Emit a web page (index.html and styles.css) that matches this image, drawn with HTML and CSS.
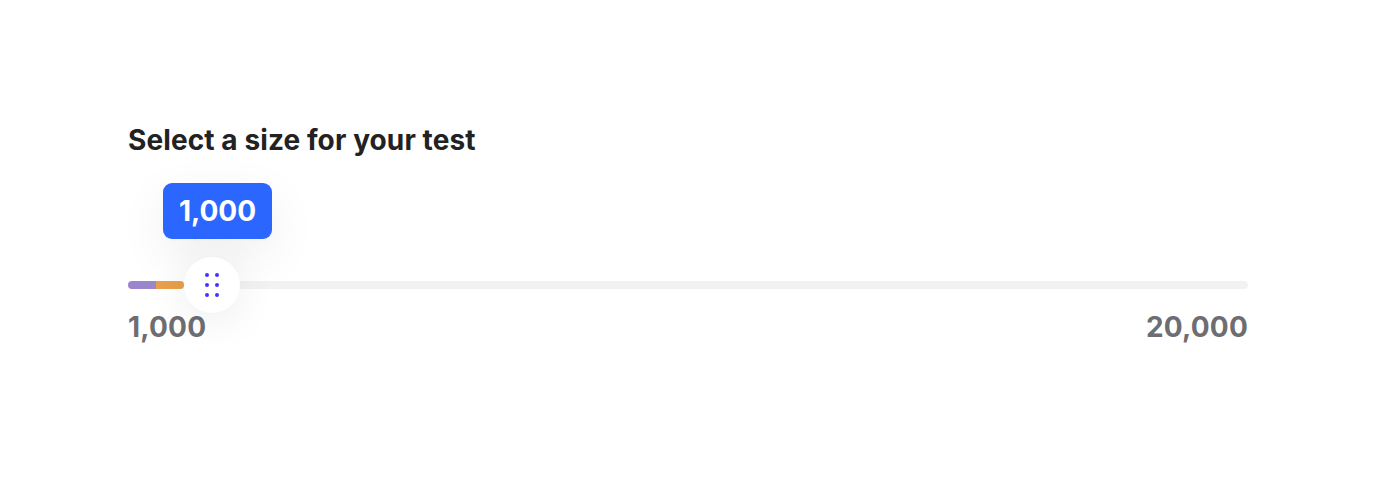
FILE: index.html
```html
<!DOCTYPE html>
<html lang="en">
<head>
<meta charset="utf-8">
<title>Select a size</title>
<link rel="stylesheet" href="styles.css">
</head>
<body>
<div class="wrap">
  <h1 class="title">Select a size for your test</h1>
  <div class="slider">
    <div class="track">
      <div class="fill">
        <span class="fill-a"></span><span class="fill-b"></span>
      </div>
    </div>
    <div class="tooltip">1,000</div>
    <div class="thumb">
      <svg width="14" height="24" viewBox="0 0 14 24" aria-hidden="true">
        <circle cx="2" cy="2" r="2"/><circle cx="12" cy="2" r="2"/>
        <circle cx="2" cy="12" r="2"/><circle cx="12" cy="12" r="2"/>
        <circle cx="2" cy="22" r="2"/><circle cx="12" cy="22" r="2"/>
      </svg>
    </div>
    <div class="labels">
      <span>1,000</span>
      <span>20,000</span>
    </div>
  </div>
</div>
</body>
</html>
```

FILE: styles.css
```css
html, body {
  margin: 0;
  background: #ffffff;
}
body {
  font-family: Inter, "Liberation Sans", sans-serif;
  -webkit-font-smoothing: antialiased;
}
.wrap {
  width: 1120px;
  padding: 123px 128px 0;
}
.title {
  margin: 0;
  font-size: 28px;
  line-height: 34px;
  font-weight: 700;
  color: #222222;
  letter-spacing: 0.1px;
}
.slider {
  position: relative;
  padding-top: 124px;
}
.track {
  height: 8px;
  border-radius: 4px;
  background: #f2f2f1;
}
.fill {
  display: flex;
  width: 56px;
  height: 8px;
  border-radius: 4px;
  overflow: hidden;
}
.fill-a {
  flex: 1;
  background: #9b85cc;
}
.fill-b {
  flex: 1;
  background: #e9a04b;
}
.tooltip {
  position: absolute;
  left: 35px;
  top: 26px;
  width: 109px;
  height: 56px;
  border-radius: 9px;
  background: #2b66ff;
  color: #ffffff;
  font-size: 28px;
  font-weight: 700;
  line-height: 56px;
  text-align: center;
  box-shadow: 0 16px 50px rgba(0, 0, 0, 0.07);
}
.thumb {
  position: absolute;
  left: 56px;
  top: 100px;
  width: 56px;
  height: 56px;
  border-radius: 50%;
  background: #ffffff;
  display: flex;
  align-items: center;
  justify-content: center;
  box-shadow: 0 8px 40px rgba(0, 0, 0, 0.08);
}
.thumb svg {
  fill: #4433ff;
}
.labels {
  display: flex;
  justify-content: space-between;
  margin-top: 21px;
  font-size: 28px;
  line-height: 34px;
  font-weight: 700;
  color: #6d6d72;
  letter-spacing: 0.2px;
}
```
